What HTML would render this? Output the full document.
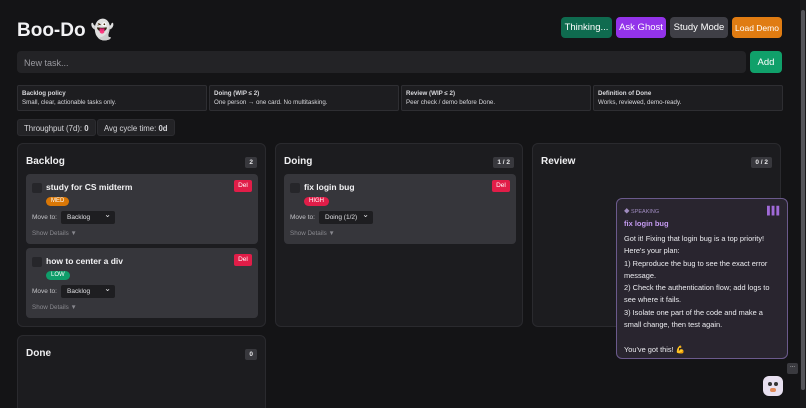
<!DOCTYPE html>
<html><head><meta charset="utf-8"><style>
*{box-sizing:border-box;margin:0;padding:0}
html{width:806px;height:408px;overflow:hidden}
body{width:806px;height:408px;overflow:hidden;background:#141416;font-family:"Liberation Sans","Noto Sans CJK JP",sans-serif;color:#e8e8ea;position:relative}
.a{position:absolute}
h1{position:absolute;left:17px;top:18px;font-size:19px;font-weight:bold;color:#f2f2f4}
.btn{position:absolute;top:17px;height:21px;border-radius:4px;font-size:9.5px;color:#fff;display:flex;align-items:center;justify-content:center}
.input{left:17px;top:51px;width:729px;height:22px;background:#232326;border-radius:4px;font-size:9px;color:#9a9aa0;padding:7px 7px}
.pol{top:85px;height:26px;width:190px;background:#1d1d20;border:1px solid #2e2e32;border-radius:2px;font-size:6.2px;padding:4px 4px;line-height:1.45;color:#d8d8dc}
.pol b{display:block}
.stat{top:119px;height:17px;background:#232326;border:1px solid #2c2c30;border-radius:3px;font-size:7.8px;padding:4px 6px;color:#d8d8dc}
.col{background:#1c1c1f;border:1px solid #2a2a2e;border-radius:6px}
.ct{position:absolute;left:8px;top:12px;font-size:10px;font-weight:bold;color:#f0f0f2}
.cnt{position:absolute;right:8px;top:13px;height:11px;padding:0 4px;background:#38383d;border-radius:2px;font-size:6.5px;font-weight:bold;line-height:11px}
.card{position:absolute;left:8px;width:232px;height:70px;background:#36363b;border-radius:4px}
.chk{position:absolute;left:6px;top:9px;width:10px;height:10px;background:#26262a;border-radius:2px}
.tt{position:absolute;left:20px;top:8px;font-size:8.5px;font-weight:bold;color:#f2f2f4}
.del{position:absolute;right:6px;top:6px;width:18px;height:12px;background:#e11d48;border-radius:2px;font-size:6.5px;text-align:center;line-height:12px;color:#fff}
.tag{position:absolute;left:20px;top:23px;height:9px;padding:0 5px;border-radius:5px;font-size:6px;line-height:9px;color:#fff}
.mv{position:absolute;left:6px;top:40px;font-size:6.5px;color:#c4c4c8}
.sel{position:absolute;left:35px;top:37px;width:54px;height:13px;background:#1e1e21;border-radius:2px;font-size:6.5px;padding:3px 6px;color:#e0e0e4}
.sel:after{content:"⌄";position:absolute;right:4px;top:-1px;font-size:8px}
.sd{position:absolute;left:6px;top:56px;font-size:6.3px;color:#88888e}
</style></head><body>
<h1>Boo-Do 👻</h1>
<div class="btn" style="left:561px;width:51px;background:#0f6b4f">Thinking...</div>
<div class="btn" style="left:616px;width:50px;background:#9333ea">Ask Ghost</div>
<div class="btn" style="left:670px;width:58px;background:#3f3f46">Study Mode</div>
<div class="btn" style="left:732px;width:50px;background:#e07c12;font-size:8.5px">Load Demo</div>
<div class="a input">New task...</div>
<div class="btn" style="left:750px;top:51px;width:32px;height:22px;background:#10a06a">Add</div>
<div class="a pol" style="left:17px"><b>Backlog policy</b>Small, clear, actionable tasks only.</div>
<div class="a pol" style="left:209px"><b>Doing (WIP ≤ 2)</b>One person → one card. No multitasking.</div>
<div class="a pol" style="left:401px"><b>Review (WIP ≤ 2)</b>Peer check / demo before Done.</div>
<div class="a pol" style="left:593px"><b>Definition of Done</b>Works, reviewed, demo-ready.</div>
<div class="a stat" style="left:17px">Throughput (7d): <b>0</b></div>
<div class="a stat" style="left:97px">Avg cycle time: <b>0d</b></div>

<div class="a col" style="left:17px;top:143px;width:249px;height:184px">
<div class="ct">Backlog</div><div class="cnt">2</div>
<div class="card" style="top:30px"><div class="chk"></div><div class="tt">study for CS midterm</div><div class="del">Del</div><div class="tag" style="background:#d97706">MED</div><div class="mv">Move to:</div><div class="sel">Backlog</div><div class="sd">Show Details ▼</div></div>
<div class="card" style="top:104px"><div class="chk"></div><div class="tt">how to center a div</div><div class="del">Del</div><div class="tag" style="background:#0f9d6a">LOW</div><div class="mv">Move to:</div><div class="sel">Backlog</div><div class="sd">Show Details ▼</div></div>
</div>
<div class="a col" style="left:275px;top:143px;width:248px;height:184px">
<div class="ct">Doing</div><div class="cnt">1 / 2</div>
<div class="card" style="top:30px"><div class="chk"></div><div class="tt">fix login bug</div><div class="del">Del</div><div class="tag" style="background:#e11d48">HIGH</div><div class="mv">Move to:</div><div class="sel" style="width:54px">Doing (1/2)</div><div class="sd">Show Details ▼</div></div>
</div>
<div class="a col" style="left:532px;top:143px;width:249px;height:184px">
<div class="ct">Review</div><div class="cnt">0 / 2</div>
</div>
<div class="a col" style="left:17px;top:335px;width:249px;height:90px">
<div class="ct">Done</div><div class="cnt">0</div>
</div>

<div class="a" style="left:616px;top:198px;width:172px;height:161px;background:#29252f;border:1px solid #6b5a8c;border-radius:6px;padding:8px 7px">
<div style="font-size:5.5px;color:#a08cc0">◆ SPEAKING</div>
<div class="a" style="right:6px;top:7px;font-size:8px;font-weight:bold;color:#a06ad8;letter-spacing:-1px">▌▌▌</div>
<div style="font-size:7.5px;font-weight:bold;color:#c49af0;margin-top:4px">fix login bug</div>
<div style="font-size:7.4px;line-height:12.3px;color:#ececf0;margin-top:5px">Got it! Fixing that login bug is a top priority!<br>Here's your plan:<br>1) Reproduce the bug to see the exact error message.<br>2) Check the authentication flow; add logs to see where it fails.<br>3) Isolate one part of the code and make a small change, then test again.<br><br>You've got this! 💪</div>
</div>
<div class="a" style="left:787px;top:363px;width:11px;height:11px;background:#3a3a3f;border-radius:2px;font-size:6px;text-align:center;color:#ddd">...</div>
<div class="a" style="left:763px;top:376px;width:20px;height:20px;background:#e8e0f0;border-radius:6px"><div class="a" style="left:5px;top:6px;width:4px;height:4px;background:#333;border-radius:50%"></div><div class="a" style="left:11px;top:6px;width:4px;height:4px;background:#333;border-radius:50%"></div><div class="a" style="left:7px;top:12px;width:6px;height:4px;background:#e08a5a;border-radius:2px"></div></div>
<div class="a" style="left:800px;top:0;width:6px;height:408px;background:#1a1a1c"></div>
<div class="a" style="left:801px;top:10px;width:4px;height:380px;background:#55555a;border-radius:2px"></div>
</body></html>
